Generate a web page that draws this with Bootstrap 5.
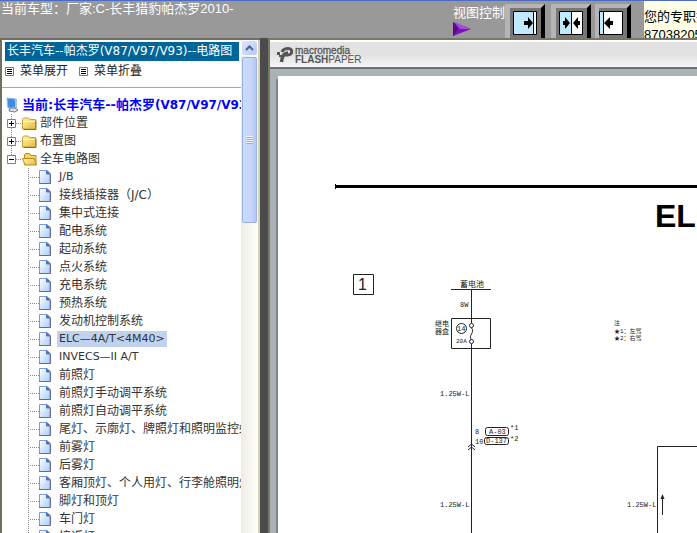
<!DOCTYPE html>
<html lang="zh-CN">
<head>
<meta charset="utf-8">
<meta name="viewport" content="width=device-width, initial-scale=1">
<title>电路图</title>
<link href="https://cdn.jsdelivr.net/npm/bootstrap@5.3.0/dist/css/bootstrap.min.css" rel="stylesheet">
<style>
body{font:12px/18px "DejaVu Sans","Noto Sans CJK SC",sans-serif;color:#222;background:#999}
.topbar{height:38px;border-top:1px solid #4a6cc4;background:#999;color:#fff;font:13px/18px "Liberation Sans","Noto Sans CJK SC",sans-serif}
.car-name{padding-left:1px;line-height:16px}
.view-label{width:52px;padding-top:3px}
.view-label svg{display:block}
.view-buttons{padding-top:3px;gap:6px;margin-right:13px}
.view-btn{padding:0;border:0;background:none;display:block}
.view-btn:last-child{margin-left:-2px}
.view-btn svg{display:block}
.notice{background:#ffffe8;color:#000;width:53px;padding-top:7px}
.frame{border:2px solid #716f64;border-right-width:0;border-bottom:0}
.sidebar{width:260px;background:#fff}
.tree-title{background:#069;color:#fff;margin:2px 2px 0 3px;height:19px;font-size:12px;font-weight:400;line-height:18px;padding-left:2px}
.menu-row{height:27px;border-bottom:1px solid #aca899;padding-left:3px;line-height:20px}
.menu-row button{padding:0;margin-right:11px;border:0;background:none;color:#222;line-height:20px}
.menu-row svg{margin-right:6px}
.tree-row{height:18px}
.tree-row a{color:#333;text-decoration:none;padding:0 2px;line-height:16px}
.tree-row a.latin{font-size:11px}
.tree-row a.picked{background:#c1d2ee}
.tree-root{height:18px;margin-top:8px}
.tree-root a{color:#00f;padding-left:3px;font-size:13px;font-weight:700;text-decoration:none}
.tree-root span{font-size:12px}
.leaf{padding-left:26px}
.scroll{width:17px;background:linear-gradient(90deg,#eeede5,#fefefb)}
.scroll-up{height:16px;padding:0;border:1px solid #fff;border-radius:3px;background:linear-gradient(135deg,#dce6ff,#b5c9f8);display:flex;align-items:center;justify-content:center}
.scroll-thumb{height:166px;margin:1px 1px 0 1px;border:1px solid #98b1e4;border-radius:2px;background:linear-gradient(90deg,#cbdafd,#c8d6fb 60%,#b3c7f6)}
.splitter{width:8px;background:#4b4b4b}
.edge{width:2px;background:#d8d2bd}
.viewer{background:#a9b3b3;border-color:#7b7768}
.paper-bar{height:29px;border-top:2px solid #fff;border-bottom:2px solid #6c7272;background:linear-gradient(#e2e2e2 50%,#f6f6f6);padding:3px 0 0 7px}
.paper-bar svg,.sheet svg{display:block}
.sheet{background:#fff;margin:7px 0 0 8px;box-shadow:-2px 3px 0 #7d8888}
</style>
<script src="https://cdn.jsdelivr.net/npm/bootstrap@5.3.0/dist/js/bootstrap.bundle.min.js"></script>
</head>
<body class="vh-100 overflow-hidden d-flex flex-column">
<svg width="0" height="0" class="position-absolute" aria-hidden="true">
<defs>
<linearGradient id="gFold" x2="1" y2="1"><stop stop-color="#fff4b0"/><stop offset="1" stop-color="#e8b93c"/></linearGradient>
<linearGradient id="gLeaf" x2="1" y2="1"><stop stop-color="#fff"/><stop offset="1" stop-color="#a9cdf8"/></linearGradient>
</defs>
<symbol id="closed" viewBox="0 0 32 18"><path d="M5.500 0v18M10 9.500h6" stroke="#888" stroke-dasharray="1 1"/><path d="M1.500 5.500h8v8h-8z" fill="#fff" stroke="#808080"/><path d="M3 9.500h5M5.500 7v5" stroke="#000"/><path d="M16.500 5.500l1-1.500h5l1.500 1.500h5.500v9.500h-13z" fill="url(#gFold)" stroke="#c99d2e"/><path d="M17 7.500h12" stroke="#fff9d0"/><path d="M17.500 15.500h12.500v-9" fill="none" stroke="#8b6e2a"/></symbol>
<symbol id="opened" viewBox="0 0 32 18"><path d="M5.500 0v5M10 9.500h6" stroke="#888" stroke-dasharray="1 1"/><path d="M1.500 5.500h8v8h-8z" fill="#fff" stroke="#808080"/><path d="M3 9.500h5" stroke="#000"/><path d="M18.500 14.500v-10l1-1h4l1.500 2h5v9z" fill="#f5d36b" stroke="#b98a1e"/><path d="M16.500 8.500h11.500l2.500 6.500h-11.500z" fill="url(#gFold)" stroke="#b98a1e"/></symbol>
<symbol id="leaf" viewBox="0 0 29 18"><path d="M.5 0v18M2 9.500h10" stroke="#888" stroke-dasharray="1 1"/><path d="M11.500 2.500h7.500l3 3v10h-10.500z" fill="url(#gLeaf)" stroke="#7a9bd8"/><path d="M18.500 2.500v3.500h4z" fill="#5272b5" stroke="#5272b5"/><path d="M11 15.500h11.500v-9" fill="none" stroke="#66699a"/></symbol>
<symbol id="menu" viewBox="0 0 9 9"><path d="M.5.5h8v8h-8z" fill="#fff" stroke="#777"/><path d="M2 2.500h5M2 4.500h5M2 6.500h5" stroke="#000"/></symbol>
<symbol id="bevel" viewBox="0 0 40 34"><path d="M0 0h40v34H0z" fill="#777"/><path d="M0 0h40l-4 4H5v30H0z" fill="#b5b5b5"/><path d="M40 0v34h-4V4z" fill="#000"/><path d="M8.500 7.500h23v23h-23z" fill="#fff" stroke="#000"/></symbol>
</svg>
<header class="topbar d-flex flex-shrink-0 overflow-hidden">
<div class="car-name flex-grow-1 text-nowrap">当前车型：厂家:C-长丰猎豹帕杰罗2010-</div>
<div class="view-label text-nowrap flex-shrink-0">视图控制<svg width="19" height="14" viewBox="0 0 19 14"><path d="M0 0l18 7L0 14z" fill="#7712b5"/><path d="M1 0l17 7H7z" fill="#a54ddc"/><path d="M0 0l5 7-5 7z" fill="#5b078e"/></svg></div>
<div class="view-buttons d-flex flex-shrink-0">
<button class="view-btn" type="button" aria-label="展开左侧"><svg width="40" height="34"><use href="#bevel" width="40" height="34"/><path d="M9 8h19v22H9z" fill="#bfeaff"/><path d="M28.500 8v22" stroke="#000"/><path d="M19 17h4v-4l5 6-5 6v-4h-4z"/></svg></button>
<button class="view-btn" type="button" aria-label="左右并列"><svg width="40" height="34"><use href="#bevel" width="40" height="34"/><path d="M9 8h11v22H9z" fill="#bfeaff"/><path d="M20.500 8v22" stroke="#000"/><path d="M12 17h2v-4l5 6-5 6v-4h-2zM29 17h-2v-4l-5 6 5 6v-4h2z"/></svg></button>
<button class="view-btn" type="button" aria-label="展开右侧"><svg width="36" height="34"><use href="#bevel" x="-4" width="40" height="34"/><path d="M0 0h4v34H0z" fill="#b5b5b5"/><path d="M5 8h3v22H5z" fill="#bfeaff"/><path d="M4.500 7v24M8.500 8v22" stroke="#000"/><path d="M18 17h-3v-4l-6 6 6 6v-4h3z"/></svg></button>
</div>
<div class="notice flex-shrink-0 text-nowrap overflow-hidden">您的专职技<br>87038205</div>
</header>
<main class="d-flex flex-grow-1 overflow-hidden">
<aside class="sidebar frame d-flex flex-shrink-0">
<div class="flex-grow-1 overflow-hidden text-nowrap">
<h1 class="tree-title overflow-hidden">长丰汽车--帕杰罗(V87/V97/V93)--电路图</h1>
<div class="menu-row"><button type="button"><svg width="9" height="9"><use href="#menu"/></svg>菜单展开</button><button type="button"><svg width="9" height="9"><use href="#menu"/></svg>菜单折叠</button></div>
<nav id="tree" aria-label="电路图目录">
<div class="tree-root d-flex align-items-center ps-1"><svg class="flex-shrink-0" width="13" height="16" viewBox="0 0 13 16"><path d="M1 1l8 1 1 8-8 1z" fill="#3c8bea" stroke="#84b5ef"/><path d="M9 1l2 1v9l-2 1z" fill="#abc4dc"/><path d="M4 11l5 0 3 2-3 2-6-1z" fill="#d9e3ec" stroke="#778"/></svg><a href="#">当前:长丰汽车--帕杰罗<span>(V87/V97/V93)</span></a></div>
</nav>
</div>
<div class="scroll flex-shrink-0"><button class="scroll-up w-100" type="button" aria-label="向上滚动"><svg width="9" height="6"><path d="M1 5l3.500-3.500L8 5" fill="none" stroke="#4d6185" stroke-width="2"/></svg></button><div class="scroll-thumb d-flex align-items-center justify-content-center"><svg width="7" height="8"><path d="M0 .5h7M0 2.500h7M0 4.500h7M0 6.500h7" stroke="#eef4fe"/><path d="M0 1.500h7M0 3.500h7M0 5.500h7M0 7.500h7" stroke="#8cb0f8"/></svg></div></div>
<div class="edge"></div>
</aside>
<div class="splitter flex-shrink-0"></div>
<section class="viewer frame flex-grow-1 overflow-hidden d-flex flex-column">
<div class="paper-bar flex-shrink-0"><svg width="90" height="20" viewBox="0 0 90 20" fill="#555"><path d="M4.500 17C5 11 7 8 11 8" fill="none" stroke="#555" stroke-width="3.500"/><path d="M5 7c1-3 4-3.500 6.500-3.500 4.500 0 4.500 6.500-1 6.500H7" fill="none" stroke="#555" stroke-width="3"/><path d="M0 7h3v3H0zM2 10h3v2H2z"/><text x="18" y="9" font-family="Liberation Sans" font-size="10" stroke="#555" stroke-width=".3">macromedia</text><text x="18" y="18" font-family="Liberation Sans" font-size="10"><tspan font-weight="700">FLASH</tspan>PAPER</text></svg></div>
<div class="sheet flex-grow-1 overflow-hidden">
<svg width="800" height="600" viewBox="278 76 800 600" font-family="Liberation Mono,Noto Sans CJK SC,monospace" font-size="7" fill="#222">
<path d="M335 186.500H1078" stroke="#000" stroke-width="3"/><path d="M335.500 184v5" stroke="#000"/>
<text x="655" y="227" font-family="Liberation Sans" font-weight="700" font-size="32" fill="#000">ELC</text>
<g fill="none" stroke="#222">
<path d="M353.500 274.500h20v20h-20zM451 289.500h40M471.500 289v34M451.500 318.500h39v30h-39zM471.500 344v200M471.500 328c4 5-4 7 0 12"/>
<path d="M657.500 544V446.500H1078M662.500 515v-18"/>
<circle cx="471.500" cy="325.500" r="2" fill="#fff"/><circle cx="471.500" cy="341.500" r="2" fill="#fff"/><circle cx="461.500" cy="328.500" r="5"/>
<rect x="485.500" y="427.500" width="23" height="8" rx="2"/><rect x="484.500" y="437.500" width="24" height="7" rx="2"/>
<path d="M468 447l3.500-3 3.500 3M468 450l3.500-3 3.500 3"/>
</g>
<path d="M662.500 494l2 5h-4z"/>
<text x="358" y="290" font-size="16" font-family="Liberation Sans">1</text>
<text x="460" y="287" font-size="8">蓄电池</text>
<text x="460" y="307">8W</text>
<text x="435" y="326">继电</text><text x="435" y="334">器盒</text>
<text x="457" y="331">14</text><text x="456" y="343" font-size="6">20A</text>
<text x="440" y="396">1.25W-L</text><text x="440" y="507">1.25W-L</text><text x="627" y="507">1.25W-L</text>
<text x="475" y="434">8</text><text x="475" y="444">10</text>
<text x="489" y="434">A-03</text><text x="486" y="443">D-137</text>
<text x="510" y="430">*1</text><text x="510" y="441">*2</text>
<text x="614" y="325" font-size="6">注</text><text x="614" y="333" font-size="6">★1：左驾</text><text x="614" y="340" font-size="6">★2：右驾</text>
</svg>
</div>
</section>
</main>
<script>
const rows=[['closed','部件位置'],['closed','布置图'],['opened','全车电路图'],...['J/B','接线插接器（J/C）','集中式连接','配电系统','起动系统','点火系统','充电系统','预热系统','发动机控制系统','ELC—4A/T<4M40>','INVECS—II A/T','前照灯','前照灯手动调平系统','前照灯自动调平系统','尾灯、示廓灯、牌照灯和照明监控蜂鸣器','前雾灯','后雾灯','客厢顶灯、个人用灯、行李舱照明灯','脚灯和顶灯','车门灯','接近灯'].map(t=>['leaf',t])];
const tree=document.getElementById('tree');
for(const [kind,label] of rows){
const row=document.createElement('div');
const width=kind==='leaf'?29:32;
row.className='tree-row d-flex align-items-center '+(kind==='leaf'?'leaf':'ps-1');
row.innerHTML=`<svg class="flex-shrink-0" width="${width}" height="18" aria-hidden="true"><use href="#${kind}" width="${width}" height="18"/></svg><a href="#"></a>`;
const link=row.querySelector('a');
link.textContent=label;
if(/^[A-Z]/.test(label))link.classList.add('latin');
if(label.startsWith('ELC'))link.classList.add('picked');
tree.append(row);
}
</script>
</body>
</html>
